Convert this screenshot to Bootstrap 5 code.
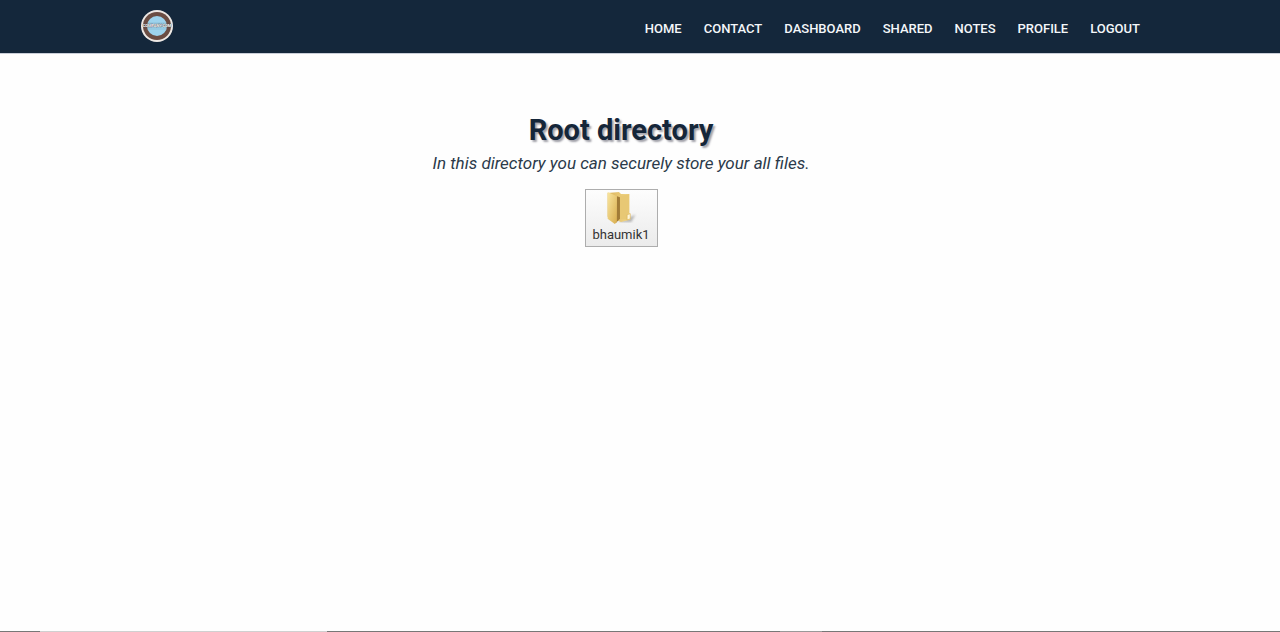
<!DOCTYPE html>
<html lang="en">
<head>
<meta charset="utf-8">
<meta name="viewport" content="width=device-width, initial-scale=1">
<title>Root directory</title>
<link href="https://cdn.jsdelivr.net/npm/bootstrap@5.3.0/dist/css/bootstrap.min.css" rel="stylesheet">
<style>
  body { font-family: Roboto, sans-serif; color: #152639; background: #fefefe; }
  .site-nav { background: #14273b; border-bottom: 1px solid #c9ced8; }
  .site-inner { max-width: 1000px; min-height: 53px; }
  .site-links { column-gap: 22px; padding-top: 4px; }
  .site-links .nav-link { color: #f4f7fa; font-size: 13px; line-height: 20px; font-weight: 500; }
  .logo { padding-bottom: 2px; }
  .logo svg { display: block; }
  .directory { padding: 58px 38px 0 0; }
  .directory h1 { font-size: 29px; line-height: 36px; font-weight: 700; text-shadow: 2px 2px 2px #a0a0a8; }
  .directory p { font-size: 17px; line-height: 30px; margin-bottom: 11px; color: #2b3a4a; }
  .folder { width: 73px; height: 58px; border: 1px solid #adadad; background: linear-gradient(#fdfdfd, #ebebeb); color: #333; font-size: 13px; line-height: 20px; }
  .edge { height: 1px; background: #777; }
  .edge-start { width: 3.125%; }
  .edge-light { width: 22.4%; background: #d0d0d0; }
  .edge-mid { width: 35.4%; }
  .edge-soft { width: 3.3%; background: #999; }
</style>
</head>
<body class="d-flex flex-column min-vh-100">
<header class="site-nav">
  <nav class="site-inner mx-auto d-flex flex-wrap align-items-center justify-content-between" aria-label="Main">
    <a class="logo" href="#" aria-label="Home page">
      <svg width="34" height="34" viewBox="0 0 34 34" aria-hidden="true">
        <circle cx="17" cy="17" r="16" fill="#eee9e5"/>
        <circle cx="17" cy="17" r="14" fill="#6b4d43"/>
        <circle cx="17" cy="17" r="10" fill="#9dd3ed"/>
        <path d="M8 14H26M8 20H26" stroke="#83b5cc" stroke-width=".6"/>
        <text x="17" y="18" text-anchor="middle" font-family="Roboto" font-weight="700" font-size="4" fill="#fff" stroke="#454545" stroke-width=".5" paint-order="stroke">COMPANY.COM</text>
      </svg>
    </a>
    <ul class="site-links nav">
      <li><a class="nav-link p-0" href="#">HOME</a></li>
      <li><a class="nav-link p-0" href="#">CONTACT</a></li>
      <li><a class="nav-link p-0" href="#">DASHBOARD</a></li>
      <li><a class="nav-link p-0" href="#">SHARED</a></li>
      <li><a class="nav-link p-0" href="#">NOTES</a></li>
      <li><a class="nav-link p-0" href="#">PROFILE</a></li>
      <li><a class="nav-link p-0" href="#">LOGOUT</a></li>
    </ul>
  </nav>
</header>
<main class="directory flex-grow-1 text-center">
  <h1 class="mb-0">Root directory</h1>
  <p class="fst-italic">In this directory you can securely store your all files.</p>
  <button type="button" class="folder p-0 d-inline-flex flex-column align-items-center">
    <svg width="36" height="35" viewBox="0 0 34 34" aria-hidden="true">
      <defs>
        <linearGradient id="front" x2="1" y2="1"><stop offset="0" stop-color="#f9e6a0"/><stop offset="1" stop-color="#d9ae50"/></linearGradient>
        <linearGradient id="back"><stop offset="0" stop-color="#dcb45a"/><stop offset="1" stop-color="#f2d98c"/></linearGradient>
        <filter id="soft"><feGaussianBlur stdDeviation="1"/></filter>
      </defs>
      <path d="M14 31L31 24L27 31Z" fill="#777" opacity=".5" filter="url(#soft)"/>
      <path d="M4 3L15 2L17 4L25 4V22L26 23V29L17 31L4 26Z" fill="url(#back)"/>
      <path d="M13 6L16 7V28L12 32Z" fill="#a17b37"/>
      <path d="M16 6L25 4V22L23 24V29L16 28Z" fill="#e8c874"/>
      <path d="M4 2L13 6V31L11 33L4 28Z" fill="url(#front)"/>
      <path d="M23 24L26 23V28L23 29Z" fill="#fff7d9" stroke="#d6a949" stroke-width=".5"/>
    </svg>
    <span>bhaumik1</span>
  </button>
</main>
<footer class="edge d-flex" aria-hidden="true">
  <div class="edge-start"></div><div class="edge-light"></div><div class="edge-mid"></div><div class="edge-soft"></div>
</footer>
<script src="https://cdn.jsdelivr.net/npm/bootstrap@5.3.0/dist/js/bootstrap.bundle.min.js"></script>
</body>
</html>
